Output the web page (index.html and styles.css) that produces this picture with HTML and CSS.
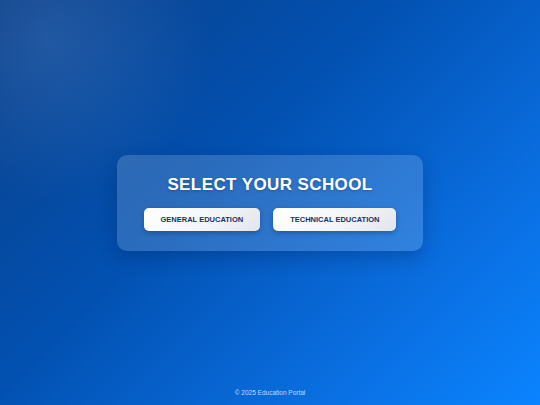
FILE: index.html
```html
<!DOCTYPE html>
<html lang="en">
<head>
<meta charset="utf-8">
<title>Select Your School</title>
<link rel="stylesheet" href="styles.css">
</head>
<body>
<div class="page">
  <main class="main">
    <section class="card">
      <h1 class="title">SELECT YOUR SCHOOL</h1>
      <div class="actions">
        <button class="btn">GENERAL EDUCATION</button>
        <button class="btn">TECHNICAL EDUCATION</button>
      </div>
    </section>
  </main>
  <footer class="footer">© 2025 Education Portal</footer>
</div>
</body>
</html>
```
FILE: styles.css
```css
html, body {
  margin: 0;
  padding: 0;
  height: 100%;
}
body {
  font-family: "Liberation Sans", Arial, sans-serif;
  background:
    radial-gradient(circle at 50px 40px, rgba(120,160,220,0.22) 0, rgba(120,160,220,0) 160px),
    linear-gradient(135deg, #0b4088 0%, #0250b0 40%, #0a6ee0 75%, #0a84ff 100%);
  color: #fff;
}
.page {
  min-height: 100vh;
  box-sizing: border-box;
  padding-top: 16px;
  display: flex;
  flex-direction: column;
}
.main {
  flex: 1;
  display: flex;
  align-items: center;
  justify-content: center;
}
.card {
  background: rgba(255,255,255,0.16);
  border-radius: 10px;
  padding: 20px 27px 20px;
  box-shadow: 0 6px 18px rgba(0,20,60,0.25);
  display: flex;
  flex-direction: column;
  align-items: center;
}
.title {
  margin: 0 0 13px;
  font-size: 17px;
  font-weight: bold;
  letter-spacing: 0.4px;
  line-height: 20px;
  text-shadow: 0 1px 3px rgba(0,0,0,0.25);
}
.actions {
  display: flex;
  gap: 13px;
}
.btn {
  font-family: "Liberation Sans", Arial, sans-serif;
  font-size: 7.5px;
  font-weight: bold;
  color: #12306a;
  border: none;
  border-radius: 5px;
  height: 23px;
  padding: 0 17px;
  background: linear-gradient(135deg, #ffffff 0%, #f3f4f6 60%, #e2e5ea 100%);
  box-shadow: 0 2px 5px rgba(0,20,60,0.3);
}
.footer {
  text-align: center;
  font-size: 6.5px;
  line-height: 7px;
  color: rgba(255,255,255,0.75);
  padding-bottom: 9px;
}
```
